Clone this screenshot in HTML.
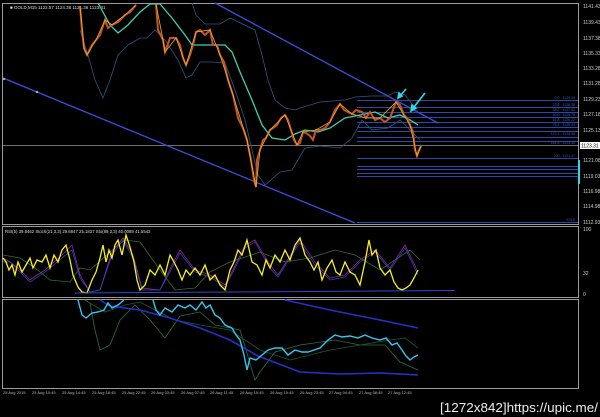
<!DOCTYPE html>
<html><head><meta charset="utf-8"><style>
html,body{margin:0;padding:0;background:#000;width:600px;height:417px;overflow:hidden}
svg{display:block}
text{font-family:"Liberation Sans",sans-serif}
</style></head><body>
<svg width="600" height="417" viewBox="0 0 600 417" xmlns="http://www.w3.org/2000/svg">
<rect width="600" height="417" fill="#000"/>
<g fill="none" stroke="#9a9a9a" stroke-width="1">
<rect x="2.5" y="3.5" width="576" height="221"/>
<rect x="2.5" y="226.5" width="576" height="71"/>
<rect x="2.5" y="299.5" width="576" height="89"/>
</g>
<line x1="3" y1="145.5" x2="578" y2="145.5" stroke="#707070" stroke-width="1"/>
<text x="10" y="9" font-size="4.5" fill="#ddd">■ GOLD,M15  1122.57 1124.38 1121.36 1123.31</text>
<g stroke="#2a4aa8" stroke-width="1">
<line x1="357" y1="100.5" x2="578" y2="100.5"/><line x1="357" y1="107.5" x2="578" y2="107.5"/>
<line x1="357" y1="112.5" x2="578" y2="112.5"/><line x1="357" y1="117.5" x2="578" y2="117.5"/>
<line x1="357" y1="122.5" x2="578" y2="122.5"/><line x1="357" y1="127.5" x2="578" y2="127.5"/>
<line x1="357" y1="131.5" x2="578" y2="131.5"/><line x1="357" y1="137.5" x2="578" y2="137.5"/>
<line x1="357" y1="141.5" x2="578" y2="141.5"/><line x1="357" y1="158.5" x2="578" y2="158.5"/>
<line x1="357" y1="166.5" x2="578" y2="166.5"/><line x1="357" y1="169.5" x2="578" y2="169.5"/>
<line x1="357" y1="173.5" x2="578" y2="173.5"/><line x1="357" y1="176.5" x2="578" y2="176.5"/>
<line x1="357" y1="222.5" x2="578" y2="222.5"/>
</g>
<g font-size="3.5" fill="#3a5ac0" text-anchor="end">
<text x="575" y="99">0.0 - 1129.25</text><text x="575" y="106">23.6 - 1128.38</text>
<text x="575" y="111">38.2 - 1127.60</text><text x="575" y="116">50.0 - 1126.78</text>
<text x="575" y="121">61.8 - 1126.22</text><text x="575" y="126">76.4 - 1125.49</text>
<text x="575" y="135">127.2 - 1124.36</text><text x="575" y="144">161.8 - 1123.30</text>
<text x="575" y="157">200 - 1121.47</text><text x="575" y="221">423.6</text>
</g>
<g stroke="#3c4ee0" stroke-width="1.3" fill="none">
<line x1="215" y1="3" x2="438" y2="123"/>
<line x1="3" y1="78" x2="355" y2="223"/>
</g>
<circle cx="4" cy="79" r="1.2" fill="#aab"/><circle cx="37" cy="92" r="1.2" fill="#aab"/>
<g fill="none" stroke="#2c5a82" stroke-width="0.8">
<path d="M80,30 L88,55 L95,80 L103,98 L110,80 L118,55 L128,45 L140,38 L147,38 L155,30 L165,40 L178,60 L186,78 L192,75 L200,62 L212,62 L225,63 L235,90 L245,120 L252,150 L258,175 L265,185 L280,172 L292,170 L298,160 L305,148 L320,146 L340,148 L352,138 L362,120 L372,130 L388,128 L400,120 L410,130 L420,140"/>
<path d="M192,3 L196,15 L205,24 L220,24 L230,18 L255,30 L262,55 L268,80 L275,100 L285,108 L295,110 L300,108 L320,102 L345,100 L355,97 L372,96 L388,96 L395,92 L405,95 L415,108"/>
</g>
<path d="M98,3 L110,25 L118,33 L128,25 L140,12 L150,4 L160,4 L172,18 L185,35 L192,45 L200,45 L212,45 L225,45 L232,52 L240,72 L252,100 L262,125 L272,138 L285,140 L295,134 L305,130 L318,132 L330,128 L345,118 L360,115 L375,112 L388,118 L400,115 L410,120 L418,125" fill="none" stroke="#40d0b0" stroke-width="1.3"/>
<path d="M80,6 L82,30 L84,48 L87,55 L92,45 L96,40 L100,35 L105,20 L108,28 L112,25 L118,22 L125,15 L130,12 L136,5 M156,4 L158,30 L163,40 L165,52 L170,38 L176,38 L180,45 L183,58 L186,65 L190,55 L193,45 L196,32 L200,30 L205,35 L210,30 L213,45 L217,45 L220,55 L224,62 L228,80 L233,95 L238,118 L243,128 L247,140 L251,160 L254,180 L256,187 L257,160 L260,150 L263,140 L266,138 L270,130 L273,128 L277,125 L281,118 L285,115 L288,120 L291,130 L294,140 L297,145 L300,143 L303,132 L306,133 L310,136 L313,140 L316,130 L320,130 L325,128 L330,122 L335,110 L340,104 L344,110 L348,112 L352,114 L356,110 L362,112 L366,118 L370,112 L375,120 L380,118 L385,122 L390,118 L393,110 L396,102 L400,105 L404,115 L407,118 L410,125 L413,132 L415,150 L417,156 L419,150 L421,146" fill="none" stroke="#c8502a" stroke-width="2"/>
<path d="M80,6 L84,48 L87,55 L96,40 L105,20 L112,25 L125,15 L136,5 M156,4 L163,40 L165,52 L176,38 L186,65 L196,32 L210,30 L220,55 L233,95 L247,140 L256,187 L260,150 L270,130 L285,115 L297,145 L303,132 L316,130 L330,122 L340,104 L352,114 L366,118 L380,118 L396,102 L410,125 L417,156 L421,146" fill="none" stroke="#e8b020" stroke-width="0.8"/>
<g stroke="#30d8e8" stroke-width="1.6" fill="#30d8e8">
<line x1="400" y1="96" x2="406" y2="89"/><polygon points="398,98 399,93 402,96"/>
<line x1="414" y1="107" x2="425" y2="93"/><polygon points="411,111 412,105 416,108"/>
</g>
<g font-size="5" fill="#ccc">
<text x="583" y="8">1141.43</text><text x="583" y="24">1139.43</text><text x="583" y="40">1137.38</text>
<text x="583" y="55">1135.33</text><text x="583" y="70">1133.28</text><text x="583" y="85">1131.28</text>
<text x="583" y="101">1129.23</text><text x="583" y="116">1127.18</text><text x="583" y="132">1125.13</text>
<text x="583" y="162">1121.08</text><text x="583" y="178">1119.03</text><text x="583" y="193">1116.98</text>
<text x="583" y="208">1114.98</text><text x="583" y="224">1112.93</text>
<text x="583" y="231">100</text><text x="583" y="275">32</text><text x="583" y="296">0</text>
</g>
<rect x="580" y="142" width="20" height="7" fill="#fff"/>
<text x="581" y="147.5" font-size="5" fill="#000">1123.31</text>
<rect x="578" y="160" width="2" height="24" fill="#30d8e8"/>
<text x="5" y="233" font-size="4.3" fill="#ddd">RSI(5) 39.8462  Stoch(21,3,3) 29.6847 25.1837  Sto(89,3,3) 40.0089 41.5542</text>
<path d="M3,255 L20,258 L35,268 L50,280 L70,282 L80,268 L90,270 L110,252 L125,240 L140,242 L160,270 L175,290 L195,288 L210,272 L230,262 L260,252 L285,262 L310,258 L335,250 L355,255 L380,270 L410,250 L420,260" fill="none" stroke="#2e6e30" stroke-width="0.8"/>
<path d="M3,258 L10,262 L18,268 L30,280 L45,270 L62,255 L72,245 L80,275 L90,292 L100,290 L112,252 L123,238 L133,255 L142,288 L160,290 L172,265 L180,250 L195,270 L210,275 L225,285 L233,270 L245,245 L255,240 L270,265 L278,275 L295,248 L300,240 L315,262 L330,278 L345,275 L360,260 L375,250 L390,268 L405,245 L418,272" fill="none" stroke="#a02090" stroke-width="0.8"/>
<path d="M3,262 L10,262 L18,270 L30,282 L45,272 L62,258 L72,250 L80,278 L90,292 L100,290 L112,255 L123,240 L133,258 L142,290 L160,290 L172,268 L180,253 L195,272 L210,277 L225,287 L233,272 L245,248 L255,242 L270,268 L278,277 L295,250 L300,243 L315,265 L330,280 L345,277 L360,262 L375,252 L390,270 L405,248 L418,275" fill="none" stroke="#2a50d0" stroke-width="0.7"/>
<path d="M3,258 L6,262 L9,270 L12,265 L15,275 L18,262 L22,272 L26,265 L30,258 L33,268 L37,260 L42,262 L46,255 L50,268 L54,255 L58,262 L62,250 L66,245 L70,260 L73,275 L78,287 L82,292 L87,293 L92,280 L96,272 L100,258 L103,245 L106,262 L109,250 L112,258 L115,245 L118,240 L122,255 L126,235 L130,247 L134,262 L137,280 L140,290 L145,285 L150,270 L155,275 L160,265 L165,275 L170,255 L174,262 L178,270 L182,280 L186,270 L190,275 L195,268 L200,275 L205,265 L210,280 L215,275 L220,285 L225,290 L230,270 L234,262 L238,250 L242,255 L247,240 L252,262 L257,265 L262,275 L266,260 L270,268 L275,255 L280,262 L285,250 L290,260 L295,245 L300,238 L305,255 L310,262 L314,270 L318,262 L322,280 L327,268 L332,260 L336,272 L340,275 L345,262 L350,272 L355,275 L360,285 L365,262 L369,240 L372,255 L376,250 L380,268 L385,275 L390,270 L394,282 L398,288 L402,290 L406,288 L410,285 L414,278 L418,270" fill="none" stroke="#f5f020" stroke-width="1.3"/>
<line x1="75" y1="293" x2="455" y2="290.5" stroke="#3048d0" stroke-width="1"/>
<g fill="none">
<path d="M90,303 L95,330 L100,350 L110,345 L120,320 L135,305 L150,320 L165,338 L180,316 L200,312 L215,325 L240,330 L255,380 L260,372 L275,352 L300,345 L335,340 L360,345 L385,345 L400,362 L418,370" stroke="#2e6e40" stroke-width="0.8"/>
<path d="M85,300 L105,312 L125,305 L140,302 L155,310 L175,320 L200,325 L230,330 L260,350 L290,360 L330,350 L360,345 L390,340 L405,338 L418,348" stroke="#1f5a35" stroke-width="0.8"/>
<path d="M100,300 L110,306 L140,310 L170,318 L200,328 L230,340 L258,356 L300,372 L340,374 L380,373 L418,375" stroke="#2232c8" stroke-width="1.6"/>
<path d="M285,300 L330,310 L380,320 L418,328" stroke="#2232c8" stroke-width="1.6"/>
<path d="M78,300 L82,315 L86,318 L92,313 L98,312 L104,310 L108,303 L112,308 L118,305 L124,300 M153,300 L156,310 L160,315 L165,308 L172,312 L178,305 L185,308 L190,305 L196,310 L202,302 L206,308 L210,305 L215,315 L220,318 L225,325 L232,328 L236,335 L240,340 L244,355 L247,370 L250,358 L256,360 L262,355 L268,350 L275,348 L282,348 L288,355 L295,350 L302,352 L308,352 L314,350 L320,348 L328,340 L335,335 L342,337 L350,336 L358,338 L365,335 L372,338 L380,340 L386,338 L392,345 L397,343 L402,350 L406,356 L410,360 L414,357 L418,355" stroke="#35c8f0" stroke-width="1.4"/>
</g>
<g font-size="4" fill="#bbb">
<text x="3" y="394">25 Aug 2015</text><text x="32" y="394">25 Aug 10:45</text><text x="62" y="394">25 Aug 14:45</text>
<text x="92" y="394">25 Aug 18:45</text><text x="122" y="394">25 Aug 22:45</text><text x="151" y="394">26 Aug 03:45</text>
<text x="181" y="394">26 Aug 07:45</text><text x="210" y="394">26 Aug 11:45</text><text x="240" y="394">26 Aug 15:45</text>
<text x="270" y="394">26 Aug 19:45</text><text x="300" y="394">26 Aug 23:45</text><text x="329" y="394">27 Aug 04:45</text>
<text x="359" y="394">27 Aug 08:45</text><text x="388" y="394">27 Aug 12:45</text>
</g>
<text x="598" y="412" font-size="13" fill="#eee" text-anchor="end" font-family="Liberation Sans Narrow, Liberation Sans, sans-serif" textLength="158" lengthAdjust="spacingAndGlyphs">[1272x842]https://upic.me/</text>
</svg>
</body></html>
